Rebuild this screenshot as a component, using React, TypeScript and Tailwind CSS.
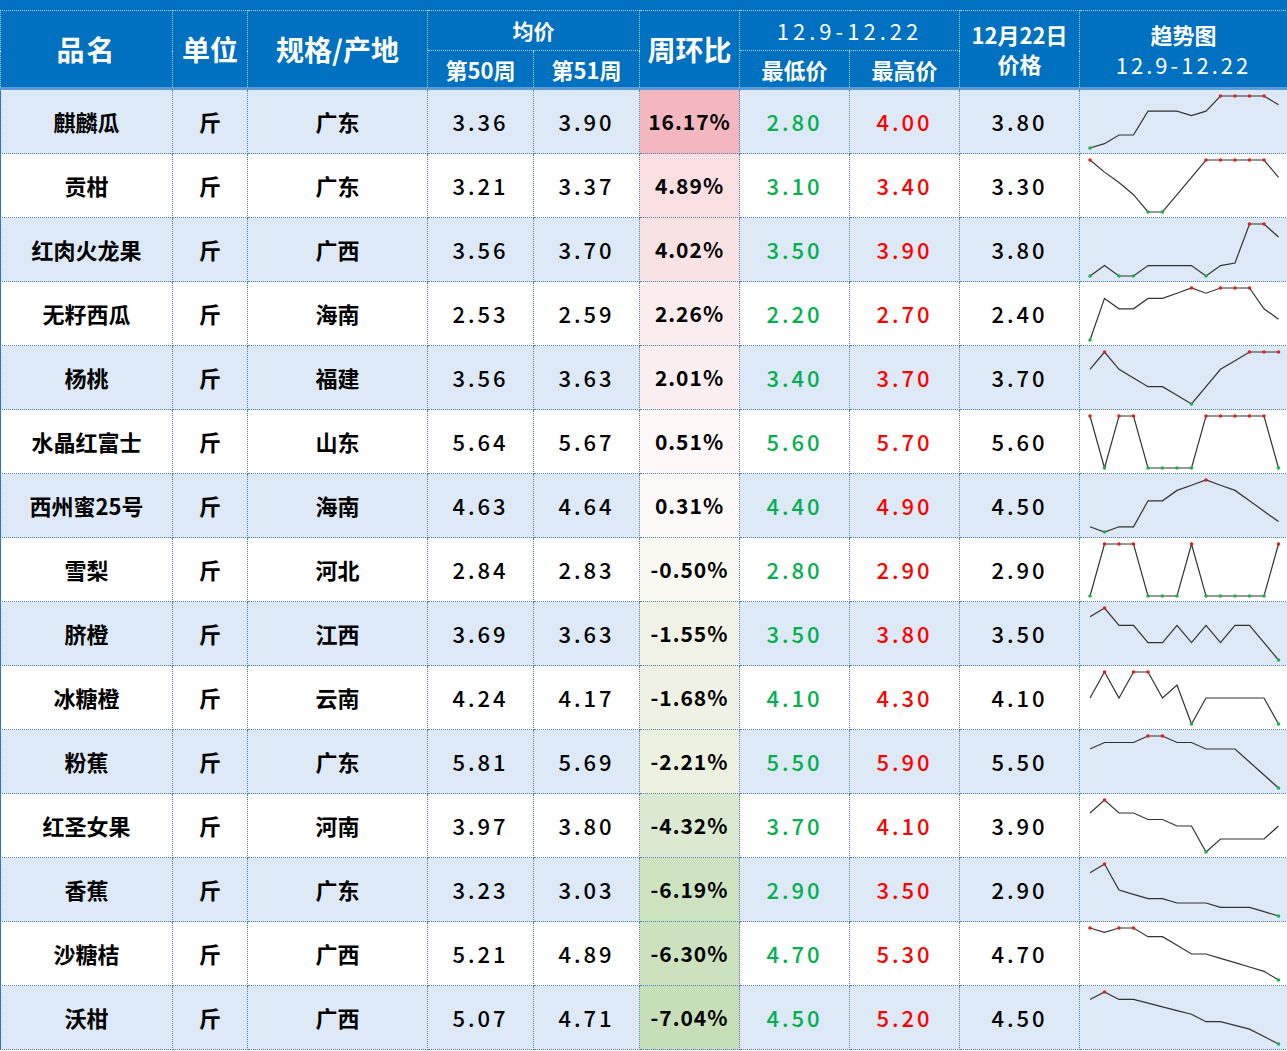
const rows: [string, string, string, string, string, string, string, string, string, string, number[]][] = [
  ['麒麟瓜', '斤', '广东', '3.36', '3.90', '16.17%', '2.80', '4.00', '3.80', '#f4b7bf', [2.8, 2.9, 3.1, 3.1, 3.65, 3.65, 3.65, 3.55, 3.65, 4, 4, 4, 4, 3.8]],
  ['贡柑', '斤', '广东', '3.21', '3.37', '4.89%', '3.10', '3.40', '3.30', '#f9dfe1', [3.4, 3.33, 3.27, 3.2, 3.1, 3.1, 3.2, 3.3, 3.4, 3.4, 3.4, 3.4, 3.4, 3.3]],
  ['红肉火龙果', '斤', '广西', '3.56', '3.70', '4.02%', '3.50', '3.90', '3.80', '#f9e2e4', [3.5, 3.58, 3.5, 3.5, 3.58, 3.58, 3.58, 3.58, 3.5, 3.58, 3.6, 3.9, 3.9, 3.8]],
  ['无籽西瓜', '斤', '海南', '2.53', '2.59', '2.26%', '2.20', '2.70', '2.40', '#fbecee', [2.2, 2.6, 2.5, 2.5, 2.6, 2.6, 2.65, 2.7, 2.65, 2.7, 2.7, 2.7, 2.5, 2.4]],
  ['杨桃', '斤', '福建', '3.56', '3.63', '2.01%', '3.40', '3.70', '3.70', '#fbeef0', [3.6, 3.7, 3.6, 3.55, 3.5, 3.5, 3.45, 3.4, 3.5, 3.6, 3.65, 3.7, 3.7, 3.7]],
  ['水晶红富士', '斤', '山东', '5.64', '5.67', '0.51%', '5.60', '5.70', '5.60', '#fdf7f8', [5.7, 5.6, 5.7, 5.7, 5.6, 5.6, 5.6, 5.6, 5.7, 5.7, 5.7, 5.7, 5.7, 5.6]],
  ['西州蜜25号', '斤', '海南', '4.63', '4.64', '0.31%', '4.40', '4.90', '4.50', '#fdf9f9', [4.45, 4.4, 4.45, 4.45, 4.7, 4.7, 4.8, 4.85, 4.9, 4.85, 4.8, 4.7, 4.6, 4.5]],
  ['雪梨', '斤', '河北', '2.84', '2.83', '-0.50%', '2.80', '2.90', '2.90', '#f9f8f1', [2.8, 2.9, 2.9, 2.9, 2.8, 2.8, 2.8, 2.9, 2.8, 2.8, 2.8, 2.8, 2.8, 2.9]],
  ['脐橙', '斤', '江西', '3.69', '3.63', '-1.55%', '3.50', '3.80', '3.50', '#f1f2e6', [3.75, 3.8, 3.7, 3.7, 3.6, 3.6, 3.7, 3.6, 3.7, 3.6, 3.7, 3.7, 3.6, 3.5]],
  ['冰糖橙', '斤', '云南', '4.24', '4.17', '-1.68%', '4.10', '4.30', '4.10', '#eff1e4', [4.2, 4.3, 4.2, 4.3, 4.3, 4.2, 4.25, 4.1, 4.2, 4.2, 4.2, 4.2, 4.2, 4.1]],
  ['粉蕉', '斤', '广东', '5.81', '5.69', '-2.21%', '5.50', '5.90', '5.50', '#ebf0df', [5.8, 5.85, 5.85, 5.85, 5.9, 5.9, 5.85, 5.85, 5.8, 5.8, 5.8, 5.7, 5.6, 5.5]],
  ['红圣女果', '斤', '河南', '3.97', '3.80', '-4.32%', '3.70', '4.10', '3.90', '#dae9cf', [4.0, 4.1, 4.0, 4.0, 3.95, 3.95, 3.9, 3.9, 3.7, 3.8, 3.8, 3.8, 3.8, 3.9]],
  ['香蕉', '斤', '广东', '3.23', '3.03', '-6.19%', '2.90', '3.50', '2.90', '#cde3c0', [3.4, 3.5, 3.2, 3.15, 3.1, 3.1, 3.05, 3.05, 3.05, 3.0, 3.0, 3.0, 2.95, 2.9]],
  ['沙糖桔', '斤', '广西', '5.21', '4.89', '-6.30%', '4.70', '5.30', '4.70', '#cce2bf', [5.3, 5.25, 5.3, 5.3, 5.2, 5.2, 5.1, 5.0, 5.0, 4.95, 4.9, 4.85, 4.8, 4.7]],
  ['沃柑', '斤', '广西', '5.07', '4.71', '-7.04%', '4.50', '5.20', '4.50', '#c6dfb8', [5.1, 5.2, 5.1, 5.1, 5.05, 5.0, 4.95, 4.9, 4.8, 4.8, 4.75, 4.7, 4.6, 4.5]],
];

function Spark({ data }: { data: number[] }) {
  const min = Math.min(...data);
  const max = Math.max(...data);
  const pts = data.map((v, i) => [10 + i * 14.5, 58 - ((v - min) / (max - min || 1)) * 52]);
  return (
    <svg width="208" height="63" className="block">
      <polyline points={pts.map((p) => p.join(',')).join(' ')} fill="none" stroke="#333" strokeWidth="1.2" />
      {pts.map((p, i) =>
        data[i] === max ? <circle key={i} cx={p[0]} cy={p[1]} r="1.8" fill="#e02020" /> : data[i] === min ? <circle key={i} cx={p[0]} cy={p[1]} r="1.8" fill="#20b050" /> : null
      )}
    </svg>
  );
}

export default function App() {
  const th = 'border border-dotted border-white/70 text-white font-bold';
  const td = 'border border-dotted border-[#4a7fb8] text-center';
  return (
    <div className="w-[1287px] h-[1051px] overflow-hidden bg-white" style={{ fontFamily: '"Noto Sans CJK SC", "Noto Sans", sans-serif' }}>
      <div className="h-[10px] bg-[#0070c0]" />
      <table className="border-collapse table-fixed w-[1287px] bg-[#0070c0]">
        <colgroup>
          {[172, 75, 180, 106, 106, 100, 110, 110, 120, 208].map((w, i) => (
            <col key={i} style={{ width: w }} />
          ))}
        </colgroup>
        <thead className="border-b-[3px] border-[#5b9bd5]">
          <tr className="h-[40px]">
            <th rowSpan={2} className={`${th} text-[28px] tracking-[2px]`}>品名</th>
            <th rowSpan={2} className={`${th} text-[28px]`}>单位</th>
            <th rowSpan={2} className={`${th} text-[28px]`}>规格/产地</th>
            <th colSpan={2} className={`${th} text-[21px]`}>均价</th>
            <th rowSpan={2} className={`${th} text-[28px]`}>周环比</th>
            <th colSpan={2} className={`${th} text-[22px] font-normal tracking-[4px]`}>12.9-12.22</th>
            <th rowSpan={2} className={`${th} text-[22px] leading-[29px]`}>12月22日<br />价格</th>
            <th rowSpan={2} className={`${th} text-[22px] leading-[30px]`}>趋势图<br /><span className="font-normal tracking-[3px]">12.9-12.22</span></th>
          </tr>
          <tr className="h-[38px]">
            <th className={`${th} text-[22px]`}>第50周</th>
            <th className={`${th} text-[22px]`}>第51周</th>
            <th className={`${th} text-[22px]`}>最低价</th>
            <th className={`${th} text-[22px]`}>最高价</th>
          </tr>
        </thead>
        <tbody className="text-[22px] text-black font-medium">
          {rows.map((r, i) => (
            <tr key={r[0]} className={`h-[64px] ${i % 2 === 0 ? 'bg-[#dde9f6]' : 'bg-white'}`}>
              <td className={`${td} font-bold`}>{r[0]}</td>
              <td className={`${td} font-bold`}>{r[1]}</td>
              <td className={`${td} font-bold`}>{r[2]}</td>
              <td className={`${td} tracking-[3px]`}>{r[3]}</td>
              <td className={`${td} tracking-[3px]`}>{r[4]}</td>
              <td className={`${td} tracking-[1px] font-bold text-[21px]`} style={{ backgroundColor: r[9] }}>{r[5]}</td>
              <td className={`${td} tracking-[3px] text-[#00b050]`}>{r[6]}</td>
              <td className={`${td} tracking-[3px] text-[#ff0000]`}>{r[7]}</td>
              <td className={`${td} tracking-[3px]`}>{r[8]}</td>
              <td className={`${td} p-0`}><Spark data={r[10]} /></td>
            </tr>
          ))}
        </tbody>
      </table>
    </div>
  );
}
